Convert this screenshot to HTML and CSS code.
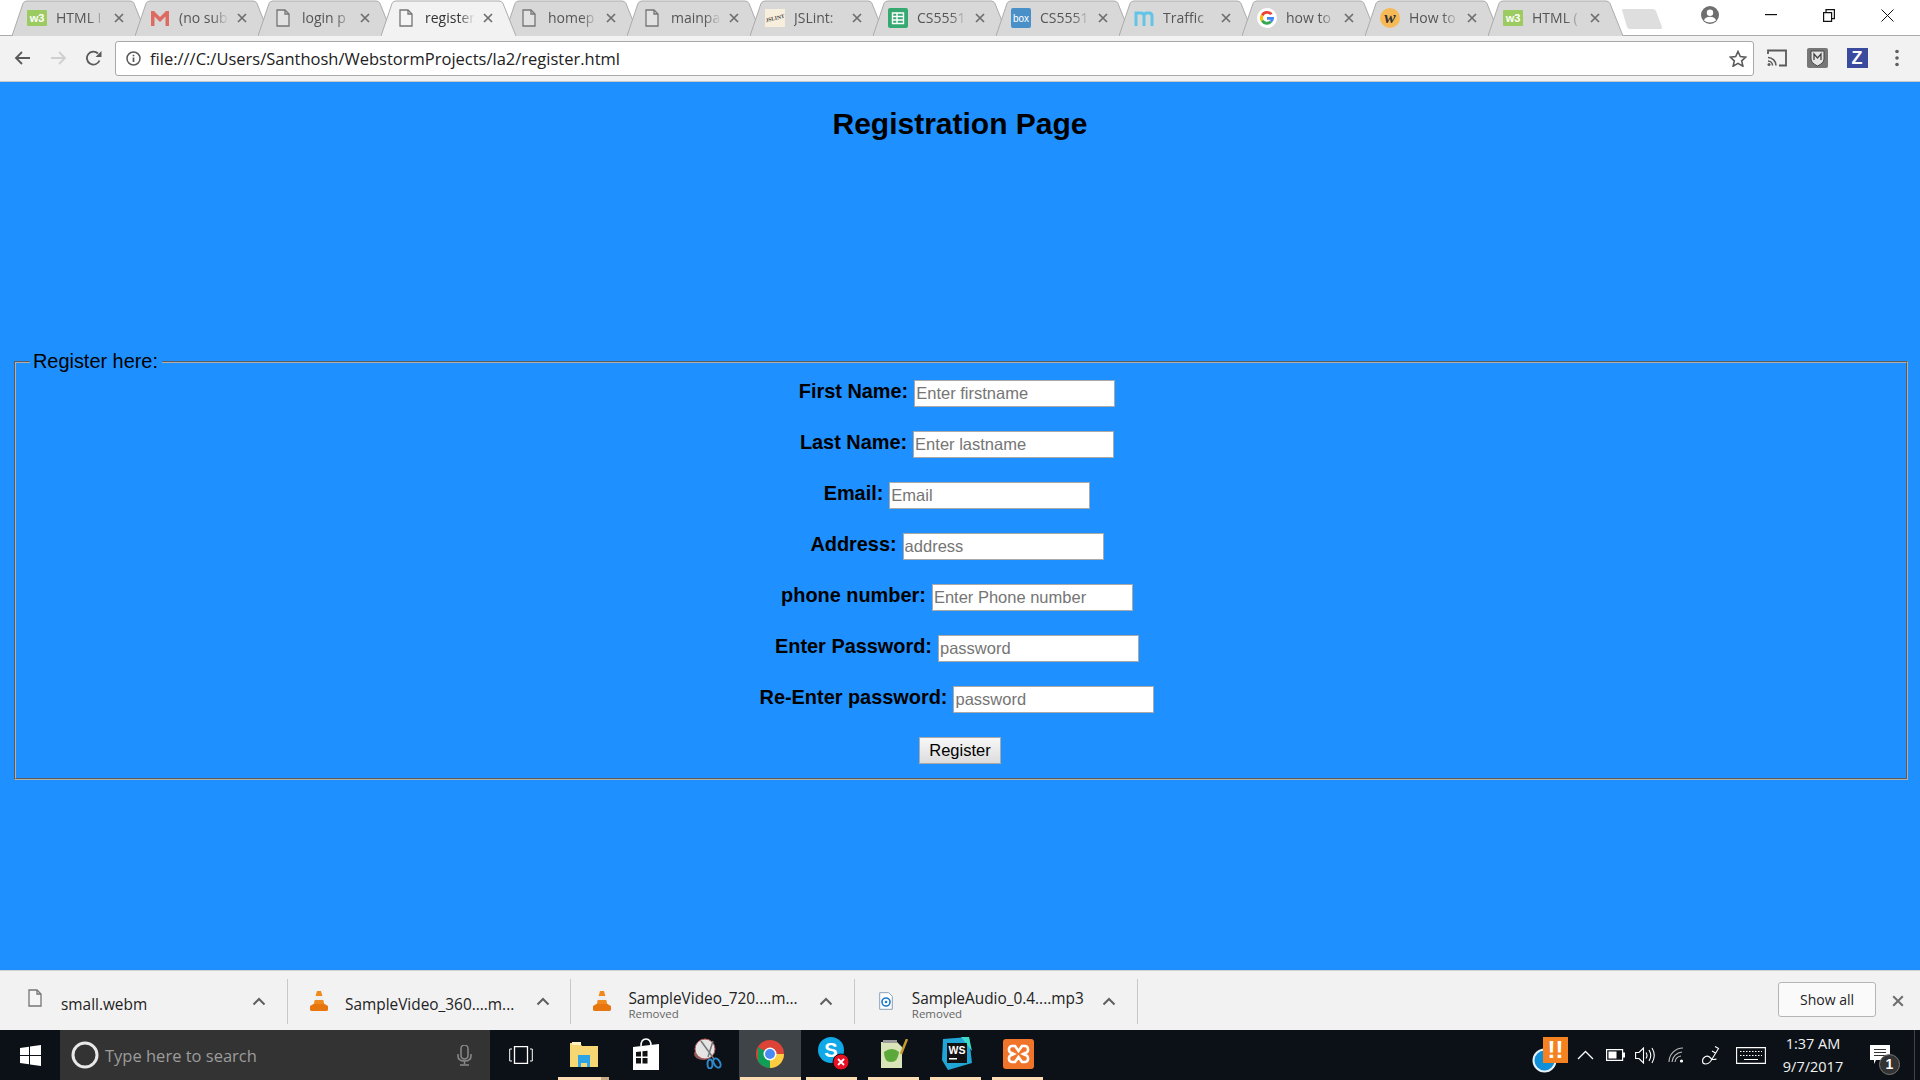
FILE: index.html
```html
<!DOCTYPE html>
<html lang="en">
<head>
<meta charset="utf-8">
<title>Registration Page</title>
<link rel="stylesheet" href="styles.css">
</head>
<body>
<svg class="defs" aria-hidden="true">
  <symbol id="tabshape" viewBox="0 0 135 35"><path d="M0 35.5 L11 3 Q12 .5 15 .5 H118 Q121 .5 122 3 L135 35.5"/></symbol>
  <symbol id="doc" viewBox="0 0 14 18"><path d="M1 1h8l4 4v12H1z" fill="#fff" fill-opacity=".25" stroke="#757575" stroke-width="1.3"/><path d="M9 1v4h4" fill="none" stroke="#757575" stroke-width="1.3"/></symbol>
  <symbol id="cone" viewBox="0 0 18 20"><path d="M7 0h4l1.4 5H5.600z" fill="#f08a1d"/><path d="M5.600 5h6.800l.9 4H4.700z" fill="#eee"/><path d="M4.700 9h8.600l1 4.500H3.700z" fill="#f08a1d"/><path d="M0 15l3.500-2h11l3.500 2v3.500q0 1.500-2 1.500H2q-2 0-2-1.500z" fill="#e8760f"/></symbol>
  <symbol id="chev" viewBox="0 0 14 9"><path d="M1.500 7.500L7 2l5.500 5.500" fill="none" stroke="#5f5f5f" stroke-width="2"/></symbol>
  <symbol id="x" viewBox="0 0 10 10"><path d="M1 1l8 8M9 1l-8 8" stroke="#6e6e6e" stroke-width="1.700" fill="none"/></symbol>
</svg>

<header class="chrome">
  <div class="strip">
    <div class="tab"><svg class="tab-shape"><use href="#tabshape"/></svg><span class="fav"><svg width="20" height="16" viewBox="0 0 20 16"><rect width="20" height="16" rx="1" fill="#9ccb62"/><text x="10" y="12" text-anchor="middle" font-family="Liberation Sans" font-size="11" font-weight="700" fill="#fff">w3</text></svg></span><span class="title">HTML I</span><svg class="close" width="10" height="10"><use href="#x"/></svg></div>
    <div class="tab"><svg class="tab-shape"><use href="#tabshape"/></svg><span class="fav"><svg width="20" height="16" viewBox="0 0 20 16"><path d="M1 1h3l6 6 6-6h3v15h-3.500V6.500L10 12 4.500 6.500V16H1z" fill="#dd6b62"/></svg></span><span class="title">(no sub</span><svg class="close" width="10" height="10"><use href="#x"/></svg></div>
    <div class="tab"><svg class="tab-shape"><use href="#tabshape"/></svg><span class="fav"><svg width="14" height="18"><use href="#doc"/></svg></span><span class="title">login p</span><svg class="close" width="10" height="10"><use href="#x"/></svg></div>
    <div class="tab tab-active"><svg class="tab-shape"><use href="#tabshape"/></svg><span class="fav"><svg width="14" height="18"><use href="#doc"/></svg></span><span class="title">register</span><svg class="close" width="10" height="10"><use href="#x"/></svg></div>
    <div class="tab"><svg class="tab-shape"><use href="#tabshape"/></svg><span class="fav"><svg width="14" height="18"><use href="#doc"/></svg></span><span class="title">homep</span><svg class="close" width="10" height="10"><use href="#x"/></svg></div>
    <div class="tab"><svg class="tab-shape"><use href="#tabshape"/></svg><span class="fav"><svg width="14" height="18"><use href="#doc"/></svg></span><span class="title">mainpa</span><svg class="close" width="10" height="10"><use href="#x"/></svg></div>
    <div class="tab"><svg class="tab-shape"><use href="#tabshape"/></svg><span class="fav"><svg width="20" height="18" viewBox="0 0 20 18"><rect width="20" height="18" fill="#f8eedc"/><text x="10" y="11" text-anchor="middle" font-family="Liberation Serif" font-size="5.500" font-weight="700" fill="#444" transform="rotate(-14 10 9)">JSLINT</text></svg></span><span class="title">JSLint:</span><svg class="close" width="10" height="10"><use href="#x"/></svg></div>
    <div class="tab"><svg class="tab-shape"><use href="#tabshape"/></svg><span class="fav"><svg width="20" height="20" viewBox="0 0 20 20"><rect width="20" height="20" rx="2" fill="#36a971"/><path d="M4.500 5h11v10.500h-11zM4.500 8.500h11M4.500 12h11M9 5v10.500" fill="none" stroke="#fff" stroke-width="1.400"/></svg></span><span class="title">CS5551</span><svg class="close" width="10" height="10"><use href="#x"/></svg></div>
    <div class="tab"><svg class="tab-shape"><use href="#tabshape"/></svg><span class="fav"><svg width="20" height="20" viewBox="0 0 20 20"><rect width="20" height="20" rx="2" fill="#4a90c8"/><text x="10" y="14" text-anchor="middle" font-family="Liberation Sans" font-size="10" fill="#fff">box</text></svg></span><span class="title">CS5551</span><svg class="close" width="10" height="10"><use href="#x"/></svg></div>
    <div class="tab"><svg class="tab-shape"><use href="#tabshape"/></svg><span class="fav"><svg width="20" height="16" viewBox="0 0 20 16"><path d="M2 16V3h5q3 0 3 3v10M10 6q0-3 3-3h2q3 0 3 3v10" fill="none" stroke="#62c5e8" stroke-width="3"/></svg></span><span class="title">Traffic</span><svg class="close" width="10" height="10"><use href="#x"/></svg></div>
    <div class="tab"><svg class="tab-shape"><use href="#tabshape"/></svg><span class="fav"><svg width="20" height="20" viewBox="0 0 20 20"><circle cx="10" cy="10" r="10" fill="#fff"/><path d="M15.500 5.500A7 7 0 0 0 4 6.400l2.300 1.800A4.200 4.200 0 0 1 13.200 7z" fill="#ea4335"/><path d="M4 6.400a7 7 0 0 0 0 7.200l2.300-1.800a4.200 4.200 0 0 1 0-3.600z" fill="#fbbc05"/><path d="M4 13.600a7 7 0 0 0 11 1l-2.300-1.800a4.200 4.200 0 0 1-6.400-1z" fill="#34a853"/><path d="M15 14.600A7 7 0 0 0 17 9h-7v2.800h3.900a3 3 0 0 1-1.200 1z" fill="#4285f4"/></svg></span><span class="title">how to</span><svg class="close" width="10" height="10"><use href="#x"/></svg></div>
    <div class="tab"><svg class="tab-shape"><use href="#tabshape"/></svg><span class="fav"><svg width="20" height="20" viewBox="0 0 20 20"><circle cx="10" cy="10" r="10" fill="#f7b956"/><text x="10" y="15" text-anchor="middle" font-family="Liberation Serif" font-size="17" font-weight="700" font-style="italic" fill="#333">w</text></svg></span><span class="title">How to</span><svg class="close" width="10" height="10"><use href="#x"/></svg></div>
    <div class="tab"><svg class="tab-shape"><use href="#tabshape"/></svg><span class="fav"><svg width="20" height="16" viewBox="0 0 20 16"><rect width="20" height="16" rx="1" fill="#9ccb62"/><text x="10" y="12" text-anchor="middle" font-family="Liberation Sans" font-size="11" font-weight="700" fill="#fff">w3</text></svg></span><span class="title">HTML (</span><svg class="close" width="10" height="10"><use href="#x"/></svg></div>
    <svg class="newtab" width="42" height="22" viewBox="0 0 42 22"><path d="M1 2q0-1 2-1h29q2 0 3 2l6 16q.5 2-2 2H9q-2 0-3-2z" fill="#dedede"/></svg>
    <svg class="profile" width="18" height="18" viewBox="0 0 18 18"><circle cx="9" cy="9" r="9" fill="#6e6e6e"/><circle cx="9" cy="6.800" r="3.200" fill="#fff"/><path d="M3 14.500q1-3.700 6-3.700t6 3.700q-2.500 2-6 2t-6-2z" fill="#fff"/></svg>
    <span class="winbtn"><svg width="12" height="2"><rect width="12" height="1.200" fill="#111"/></svg></span>
    <span class="winbtn"><svg width="12" height="13" viewBox="0 0 12 13"><path d="M.6 3.600h8v8.800h-8zM3 3.500V.6h8.400v9H8.800" fill="none" stroke="#111" stroke-width="1.200"/></svg></span>
    <span class="winbtn"><svg width="13" height="13" viewBox="0 0 13 13"><path d="M.5.500l12 12M12.500.500l-12 12" stroke="#111" stroke-width="1"/></svg></span>
  </div>
  <div class="toolbar">
    <span class="navbtn navbtn-back"><svg width="16" height="14" viewBox="0 0 16 14"><path d="M16 7H2M8 1L2 7l6 6" fill="none" stroke="#5a5a5a" stroke-width="1.800"/></svg></span>
    <span class="navbtn"><svg width="16" height="14" viewBox="0 0 16 14"><path d="M0 7h14M8 1l6 6-6 6" fill="none" stroke="#cfcfcf" stroke-width="1.800"/></svg></span>
    <span class="navbtn"><svg width="17" height="16" viewBox="0 0 17 16"><path d="M14.500 10.500A6.500 6.500 0 1 1 13 3.500" fill="none" stroke="#5a5a5a" stroke-width="1.800"/><path d="M16.500 1v6h-6z" fill="#5a5a5a"/></svg></span>
    <div class="address">
      <svg width="15" height="15" viewBox="0 0 15 15"><circle cx="7.500" cy="7.500" r="6.500" fill="none" stroke="#5a5a5a" stroke-width="1.500"/><path d="M7.500 6.500v4.500M7.500 3.700v1.500" stroke="#5a5a5a" stroke-width="1.700"/></svg>
      <span class="url">file:///C:/Users/Santhosh/WebstormProjects/la2/register.html</span>
      <svg class="star" width="18" height="17" viewBox="0 0 18 17"><path d="M9 1.500l2.300 5 5.500.6-4.100 3.700 1.200 5.400L9 13.400l-4.900 2.800 1.200-5.400L1.200 7.100l5.500-.6z" fill="none" stroke="#5a5a5a" stroke-width="1.600"/></svg>
    </div>
    <div class="exts">
      <span class="ext"><svg width="20" height="18" viewBox="0 0 20 18"><path d="M1 5V1.500h18v15h-7" fill="none" stroke="#5a5a5a" stroke-width="1.800"/><path d="M1 8.500a8 8 0 0 1 8 8M1 12a4.500 4.500 0 0 1 4.500 4.500" fill="none" stroke="#5a5a5a" stroke-width="1.600"/><circle cx="2" cy="15.500" r="1.500" fill="#5a5a5a"/></svg></span>
      <span class="ext"><svg width="21" height="20" viewBox="0 0 21 20"><rect width="21" height="20" rx="2" fill="#777"/><path d="M4 3h13v8q0 4-6.500 7Q4 15 4 11z" fill="#e6e6e6" stroke="#444"/><path d="M7 12V6l3.500 4L14 6v6" fill="none" stroke="#444" stroke-width="1.300"/></svg></span>
      <span class="ext"><span class="zext">Z</span></span>
      <span class="ext"><svg width="4" height="18" viewBox="0 0 4 18"><circle cx="2" cy="2.500" r="1.800" fill="#5f5f5f"/><circle cx="2" cy="9" r="1.800" fill="#5f5f5f"/><circle cx="2" cy="15.500" r="1.800" fill="#5f5f5f"/></svg></span>
    </div>
  </div>
</header>

<main class="page">
  <h1 class="page-title">Registration Page</h1>
  <form class="reg-form">
    <fieldset class="reg-set">
      <legend class="reg-legend">Register here:</legend>
      <div class="row"><label class="lbl">First Name:</label><input class="field" type="text" placeholder="Enter firstname"></div>
      <div class="row"><label class="lbl">Last Name:</label><input class="field" type="text" placeholder="Enter lastname"></div>
      <div class="row"><label class="lbl">Email:</label><input class="field" type="text" placeholder="Email"></div>
      <div class="row"><label class="lbl">Address:</label><input class="field" type="text" placeholder="address"></div>
      <div class="row"><label class="lbl">phone number:</label><input class="field" type="text" placeholder="Enter Phone number"></div>
      <div class="row"><label class="lbl">Enter Password:</label><input class="field" type="password" placeholder="password"></div>
      <div class="row"><label class="lbl">Re-Enter password:</label><input class="field" type="password" placeholder="password"></div>
      <div class="row-submit"><button class="submit" type="button">Register</button></div>
    </fieldset>
  </form>
</main>

<section class="downloads">
  <div class="dl dl-first">
    <span class="dl-icon"><svg width="14" height="18"><use href="#doc"/></svg></span>
    <div class="dl-text"><span class="dl-name">small.webm</span></div>
    <svg class="dl-chev" width="14" height="9"><use href="#chev"/></svg>
  </div>
  <div class="dl">
    <span class="dl-icon"><svg width="18" height="20"><use href="#cone"/></svg></span>
    <div class="dl-text"><span class="dl-name">SampleVideo_360....m...</span></div>
    <svg class="dl-chev" width="14" height="9"><use href="#chev"/></svg>
  </div>
  <div class="dl">
    <span class="dl-icon"><svg width="18" height="20"><use href="#cone"/></svg></span>
    <div class="dl-text"><span class="dl-name">SampleVideo_720....m...</span><span class="dl-sub">Removed</span></div>
    <svg class="dl-chev" width="14" height="9"><use href="#chev"/></svg>
  </div>
  <div class="dl">
    <span class="dl-icon"><svg width="14" height="18" viewBox="0 0 14 18"><path d="M.7.700h9l3.600 3.600v13H.7z" fill="#fff" stroke="#8aa0b5"/><circle cx="7" cy="10" r="4" fill="none" stroke="#1c78c8" stroke-width="1.600"/><circle cx="7" cy="10" r="1.300" fill="#1c78c8"/></svg></span>
    <div class="dl-text"><span class="dl-name">SampleAudio_0.4....mp3</span><span class="dl-sub">Removed</span></div>
    <svg class="dl-chev" width="14" height="9"><use href="#chev"/></svg>
  </div>
  <button class="showall" type="button">Show all</button>
  <svg class="dl-close" width="12" height="12" viewBox="0 0 10 10"><use href="#x"/></svg>
</section>

<footer class="taskbar">
  <span class="start"><svg width="21" height="21" viewBox="0 0 21 21"><path d="M0 3l9-1.300V10H0zM10 1.500L21 0v10H10zM0 11h9v8.300L0 18zM10 11h11v10l-11-1.500z" fill="#fff"/></svg></span>
  <div class="search">
    <svg class="cortana" width="28" height="28" viewBox="0 0 28 28"><circle cx="14" cy="14" r="12" fill="none" stroke="#e8e8e8" stroke-width="3"/></svg>
    <span class="search-text">Type here to search</span>
    <svg class="mic" width="15" height="21" viewBox="0 0 15 21"><rect x="4" y="0" width="7" height="14" rx="3.500" fill="none" stroke="#8a8a8a" stroke-width="1.500"/><path d="M1 9v2q0 5 6.500 5T14 11V9M7.500 16v3M3 20h9" fill="none" stroke="#8a8a8a" stroke-width="1.500"/></svg>
  </div>
  <span class="taskview"><svg width="24" height="18" viewBox="0 0 24 18"><path d="M5.500.7h13v16.600h-13z" fill="none" stroke="#fff" stroke-width="1.300"/><path d="M3 3H.7v12H3M21 3h2.300v12H21" fill="none" stroke="#fff"/></svg></span>
  <span class="app"><svg width="28" height="26" viewBox="0 0 28 26"><path d="M0 2h10l2 3h16v21H0z" fill="#f7d774"/><rect x="2" y="1" width="9" height="3" fill="#fff3c4"/><path d="M8 17h12v9h-3v-4h-6v4H8z" fill="#2da4e6"/><path d="M8 17h12v-3H8z" fill="#2da4e6"/></svg><i class="run run-split"></i></span>
  <span class="app"><svg width="26" height="32" viewBox="0 0 26 32"><path d="M0 9l26-3v26H0z" fill="#fff"/><path d="M8 8q0-7 5-7t5 7" fill="none" stroke="#fff" stroke-width="1.600"/><path d="M3 14l5-.5v5H3zM9.500 13.300l5-.5v5.700h-5zM3 20h5v5.500H3zM9.500 20h5v5.500h-5z" fill="#111"/></svg></span>
  <span class="app"><svg width="30" height="31" viewBox="0 0 30 31"><ellipse cx="10" cy="16" rx="9" ry="6" fill="#8a5a5a"/><ellipse cx="12" cy="11" rx="10" ry="10" fill="#e4e4e4" stroke="#b25a5a"/><path d="M8 3l13 18M20 3L15 19" stroke="#777" stroke-width="1.500"/><ellipse cx="24" cy="25" rx="3" ry="5" fill="none" stroke="#2e88c8" stroke-width="2" transform="rotate(-30 24 25)"/><ellipse cx="17" cy="26" rx="2.500" ry="4.500" fill="none" stroke="#2e88c8" stroke-width="2"/></svg></span>
  <span class="app app-active"><svg width="28" height="28" viewBox="0 0 28 28"><circle cx="14" cy="14" r="14" fill="#db4437"/><path d="M14 14L26.100 21A14 14 0 0 1 1.900 21L2 7z" fill="#0f9d58"/><path d="M14 14H28A14 14 0 0 1 14 28z" fill="#ffcd40"/><circle cx="14" cy="14" r="6.500" fill="#fff"/><circle cx="14" cy="14" r="5" fill="#4a8af4"/></svg><i class="run run-full"></i></span>
  <span class="app"><span class="skype"><svg width="31" height="34" viewBox="0 0 31 34"><circle cx="13" cy="13" r="13" fill="#11a8e8"/><text x="13" y="20" text-anchor="middle" font-family="Liberation Sans" font-size="20" font-weight="700" fill="#fff">S</text><circle cx="23" cy="25" r="8" fill="#e81123" stroke="#111"/><path d="M20 22l6 6M26 22l-6 6" stroke="#fff" stroke-width="1.800"/></svg></span><i class="run"></i></span>
  <span class="app"><svg width="28" height="30" viewBox="0 0 28 30"><path d="M1 3h16l5 5v21H1z" fill="#d9e4b8"/><path d="M3 1h14v3H3z" fill="#9c9c9c"/><path d="M4 13q8-6 15 0-1 10-8 10T4 13z" fill="#5da83a"/><path d="M21 15L27 0" stroke="#c89a32" stroke-width="2.500"/></svg><i class="run"></i></span>
  <span class="app"><svg width="31" height="33" viewBox="0 0 31 33"><path d="M2 2l26-2 3 26-24 7-6-10z" fill="#21a5d6"/><path d="M20 0l8 0 3 14z" fill="#3ddbc8"/><rect x="6" y="6" width="20" height="20" fill="#111"/><text x="16" y="17" text-anchor="middle" font-family="Liberation Sans" font-size="10.500" font-weight="700" fill="#fff">WS</text><rect x="8" y="21" width="8" height="1.500" fill="#fff"/></svg><i class="run"></i></span>
  <span class="app"><svg width="31" height="30" viewBox="0 0 31 30"><rect width="31" height="30" rx="3" fill="#f0752b"/><path d="M9 7h3l3.500 5L19 7h3a3 3 0 0 1 3 3v1a3 3 0 0 1-3 3l-2 1 2 1a3 3 0 0 1 3 3v1a3 3 0 0 1-3 3h-3l-3.500-5L12 23H9a3 3 0 0 1-3-3v-1a3 3 0 0 1 3-3l2-1-2-1a3 3 0 0 1-3-3v-1a3 3 0 0 1 3-3z" fill="none" stroke="#fff" stroke-width="2.600"/></svg><i class="run"></i></span>

  <div class="tray">
    <span class="alert"><svg class="alert-circle" width="25" height="25" viewBox="0 0 25 25"><circle cx="12.500" cy="12.500" r="11" fill="#0f8fd8" stroke="#e6f2fa" stroke-width="2"/></svg><span class="alert-badge">!!</span></span>
    <svg class="t-chev" width="17" height="10" viewBox="0 0 17 10"><path d="M1 9l7.500-7.500L16 9" fill="none" stroke="#fff" stroke-width="1.300"/></svg>
    <svg class="t-batt" width="19" height="12" viewBox="0 0 19 12"><path d="M.6.600h16v10.800H.6z" fill="none" stroke="#fff" stroke-width="1.200"/><rect x="2.500" y="2.500" width="8" height="7" fill="#fff"/><rect x="17" y="3.500" width="2" height="5" fill="#fff"/></svg>
    <svg class="t-vol" width="20" height="17" viewBox="0 0 20 17"><path d="M.6 5.500h3.400L8.500 1v15L4 11.500H.6z" fill="none" stroke="#fff" stroke-width="1.100"/><path d="M11 5.500q2 3 0 6M14 3q3.500 5.500 0 11M17 1q4.500 7.500 0 15" fill="none" stroke="#fff" stroke-width="1.100"/></svg>
    <svg class="t-wifi" width="16" height="16" viewBox="0 0 16 16"><path d="M1 15A14 14 0 0 1 15 1M4 15A11 11 0 0 1 14 5M7 15a7 7 0 0 1 6-6" fill="none" stroke="#bdbdbd" stroke-width="1.100"/><circle cx="13.500" cy="14" r="1.600" fill="#fff"/></svg>
    <svg class="t-pen" width="21" height="20" viewBox="0 0 21 20"><path d="M14 1.500l3.500 2-8 13q-2 2.500-5 2.500t-3-3 3-4.500q2-1 4 .5l2 2q2 1 5 0M11 6l3.500 2" fill="none" stroke="#fff" stroke-width="1.100"/></svg>
    <svg class="t-kbd" width="30" height="17" viewBox="0 0 30 17"><path d="M.6.600h28.800v15.800H.6z" fill="none" stroke="#fff" stroke-width="1.100"/><path d="M4 4.500h22M4 8.500h22" stroke="#fff" stroke-dasharray="1.500 1.500"/><path d="M8 12.500h14" stroke="#fff"/></svg>
    <div class="clock"><span>1:37 AM</span><span>9/7/2017</span></div>
    <span class="notif"><svg width="20" height="19" viewBox="0 0 20 19"><path d="M0 0h20v15H6l-2 4v-4H0z" fill="#fff"/><path d="M4 4.500h12M4 7.500h12M4 10.500h12" stroke="#333"/></svg><span class="notif-count">1</span></span>
    <i class="peek"></i>
  </div>
</footer>
</body>
</html>
```

FILE: styles.css
```css
* { box-sizing: border-box; }
html, body { margin: 0; padding: 0; height: 100%; }
body {
  display: flex;
  flex-direction: column;
  height: 100vh;
  overflow: hidden;
  font-family: "Liberation Sans", Arial, sans-serif;
  background: #1e90ff;
}
.defs { position: absolute; width: 0; height: 0; }

/* browser chrome */
.chrome { flex: none; }
.strip {
  display: flex;
  align-items: flex-start;
  height: 36px;
  padding-left: 12px;
  background: #fff;
  border-bottom: 1px solid #ababab;
}
.tab {
  position: relative;
  display: flex;
  align-items: center;
  flex: none;
  width: 135px;
  height: 36px;
  margin-right: -12px;
  padding-left: 15px;
  padding-bottom: 1px;
  color: #555;
  fill: #d8d8d8;
  stroke: #ababab;
}
.tab-active { z-index: 2; fill: #f2f2f2; color: #333; }
.tab-shape { position: absolute; left: 0; top: 0; width: 135px; height: 36px; overflow: visible; }
.fav {
  position: relative;
  display: flex;
  justify-content: center;
  align-items: center;
  flex: none;
  width: 20px;
  height: 20px;
  stroke: none;
}
.title {
  position: relative;
  flex: none;
  width: 58px;
  margin-left: 9px;
  overflow: hidden;
  white-space: nowrap;
  font-family: "Open Sans", sans-serif;
  font-size: 14px;
  -webkit-mask-image: linear-gradient(90deg, #000 58%, transparent 86%);
  mask-image: linear-gradient(90deg, #000 58%, transparent 86%);
  stroke: none;
}
.close { position: relative; flex: none; stroke: none; }
.newtab { flex: none; margin: 8px 0 0 10px; }
.profile { flex: none; margin: 6px 0 0 38px; }
.winbtn {
  display: flex;
  align-items: center;
  justify-content: center;
  flex: none;
  width: 58px;
  height: 30px;
}
.profile + .winbtn { margin-left: 23px; }

.toolbar {
  display: flex;
  align-items: center;
  height: 46px;
  padding: 5px 3px 6px 6px;
  background: #f2f2f2;
  border-bottom: 1px solid #c9c9c9;
}
.navbtn {
  display: flex;
  align-items: center;
  justify-content: center;
  flex: none;
  width: 35px;
  height: 35px;
}
.navbtn-back { padding-right: 3px; }
.address {
  display: flex;
  align-items: center;
  flex: 1;
  height: 35px;
  margin-left: 4px;
  padding: 0 6px 0 10px;
  background: #fff;
  border: 1px solid #a9a9a9;
  border-radius: 3px;
}
.url {
  margin-left: 9px;
  font-family: "Open Sans", sans-serif;
  font-size: 16.500px;
  color: #222;
  white-space: nowrap;
}
.star { margin-left: auto; }
.exts { display: flex; flex: none; margin-left: 3px; }
.ext {
  display: flex;
  align-items: center;
  justify-content: center;
  width: 40px;
  height: 35px;
}
.zext {
  display: block;
  width: 21px;
  height: 20px;
  background: #3a4a9c;
  color: #fff;
  font-size: 18px;
  font-weight: 700;
  line-height: 20px;
  text-align: center;
}

/* page */
.page {
  flex: 1;
  min-height: 0;
  padding: 0 12px 0 14px;
  background: #1e90ff;
}
.page-title {
  margin: 25px 0 0;
  padding-right: 2px;
  font-size: 30px;
  line-height: 34px;
  font-weight: 700;
  text-align: center;
  color: #000;
}
.reg-form { margin: 209px 0 0; }
.reg-set {
  margin: 0;
  min-width: 0;
  height: 430px;
  padding: 0 14px;
  border: 2px groove #b0b0b0;
}
.reg-legend {
  padding: 0 4px 0 3px;
  font-size: 19.900px;
  line-height: 23px;
  color: #000;
}
.row {
  display: flex;
  justify-content: center;
  align-items: baseline;
  gap: 6px;
  height: 51px;
  padding: 7px 8px 0 0;
}
.lbl {
  position: relative;
  top: -1px;
  font-size: 19.900px;
  font-weight: 700;
  color: #000;
}
.field {
  width: 201px;
  height: 27px;
  padding: 1px 2px 1px 1px;
  background: #fff;
  border: 1px solid #a9a9a9;
  border-radius: 0;
  font-family: "Liberation Sans", Arial, sans-serif;
  font-size: 16.500px;
}
.field::placeholder { color: #757575; opacity: 1; }
.row-submit { display: flex; justify-content: center; padding: 7px 2px 0 0; }
.submit {
  width: 82px;
  height: 27px;
  padding: 0;
  background: linear-gradient(#f8f8f8, #dcdcdc);
  border: 1px solid #a9a9a9;
  border-radius: 0;
  font-family: "Liberation Sans", Arial, sans-serif;
  font-size: 16.500px;
  color: #000;
}

/* download shelf */
.downloads {
  display: flex;
  align-items: center;
  flex: none;
  height: 60px;
  padding-top: 1px;
  background: #f2f2f2;
  border-top: 1px solid #d2d2d2;
}
.dl {
  display: flex;
  align-items: center;
  flex: none;
  width: 283.400px;
  height: 45px;
  border-right: 1px solid #c8c8c8;
}
.dl-first { width: 288px; padding-left: 4px; }
.dl-icon {
  display: flex;
  align-items: center;
  justify-content: center;
  flex: none;
  width: 36px;
  margin-left: 13px;
}
.dl-first .dl-icon { margin-top: -7px; }
.dl-text {
  display: flex;
  flex-direction: column;
  flex: none;
  width: 188.500px;
  margin-top: 8px;
  margin-left: 8px;
  color: #222;
}
.dl-name { font-family: "Open Sans", sans-serif; font-size: 15.400px; line-height: 18px; white-space: nowrap; }
.dl-sub { font-family: "Open Sans", sans-serif; font-size: 11.500px; line-height: 12px; color: #666; }
.dl-chev { flex: none; margin-left: 2px; }
.showall {
  flex: none;
  width: 98px;
  height: 35px;
  margin: -3px 0 0 auto;
  padding: 0;
  background: #fafafa;
  border: 1px solid #b5b5b5;
  border-radius: 3px;
  font-family: "Open Sans", sans-serif;
  font-size: 14px;
  color: #222;
}
.dl-close { flex: none; margin: 0 16px 0 16px; }

/* taskbar */
.taskbar {
  display: flex;
  align-items: stretch;
  flex: none;
  height: 50px;
  background: #0b1116;
}
.start {
  display: flex;
  align-items: center;
  justify-content: center;
  flex: none;
  width: 60px;
}
.search {
  display: flex;
  align-items: center;
  flex: none;
  width: 430px;
  padding: 0 18px 0 11px;
  background: #333;
}
.search-text {
  margin-left: 6px;
  font-family: "Open Sans", sans-serif;
  font-size: 16.500px;
  color: #9c9c9c;
}
.mic { margin-left: auto; }
.taskview {
  display: flex;
  align-items: center;
  justify-content: center;
  flex: none;
  width: 61px;
  margin-right: 2px;
}
.app {
  position: relative;
  display: flex;
  align-items: center;
  justify-content: center;
  flex: none;
  width: 62px;
  padding-bottom: 3px;
}
.app-active { background: #3e4447; }
.run {
  position: absolute;
  left: 5px;
  right: 6px;
  bottom: 0;
  height: 3px;
  background: #fcdcb2;
}
.run-full { left: 1px; right: 0; }
.run-split { background: linear-gradient(90deg, #fcdcb2 84%, #c9ab88 84%); }
.skype { display: flex; margin-left: 3px; }
.tray {
  position: relative;
  display: flex;
  align-items: center;
  flex: none;
  margin-left: auto;
  color: #fff;
}
.alert { position: relative; display: block; width: 36px; height: 50px; }
.alert-circle { position: absolute; left: 0; top: 18px; }
.alert-badge {
  position: absolute;
  left: 11px;
  top: 7px;
  width: 25px;
  height: 26px;
  background: #f58220;
  color: #fff;
  font-size: 24px;
  font-weight: 700;
  line-height: 26px;
  text-align: center;
}
.t-chev { margin-left: 9px; }
.t-batt { margin-left: 12px; }
.t-vol { margin-left: 10px; }
.t-wifi { margin-left: 13px; }
.t-pen { margin-left: 17px; }
.t-kbd { margin-left: 14px; }
.clock {
  display: flex;
  flex-direction: column;
  align-items: center;
  width: 78px;
  margin-left: 8px;
  font-family: "Open Sans", sans-serif;
  font-size: 14.500px;
  line-height: 23px;
  color: #f2f2f2;
}
.notif { position: relative; display: block; width: 51px; height: 50px; margin-left: 7px; padding: 15px 0 0 11px; }
.notif-count {
  position: absolute;
  left: 20px;
  top: 24px;
  width: 21px;
  height: 21px;
  background: #333;
  border: 1px solid #777;
  border-radius: 50%;
  font-size: 14px;
  font-weight: 700;
  line-height: 19px;
  text-align: center;
}
.peek { display: block; width: 6px; height: 50px; margin-left: 4px; border-left: 1px solid #444; }
```
